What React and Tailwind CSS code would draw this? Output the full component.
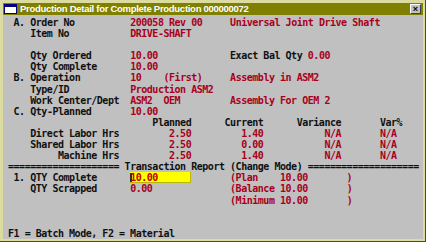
import React from "react";

const RED = "text-[#a8001c]";

// each row: [col, text, red?] ; "input" is the yellow edit field
const rows = [
  [[1, "A."], [4, "Order No"], [22, "200058 Rev 00", 1], [40, "Universal Joint Drive Shaft", 1]],
  [[4, "Item No"], [22, "DRIVE-SHAFT", 1]],
  [],
  [[4, "Qty Ordered"], [22, "10.00", 1], [40, "Exact Bal Qty"], [54, "0.00", 1]],
  [[4, "Qty Complete"], [22, "10.00", 1]],
  [[1, "B."], [4, "Operation"], [22, "10", 1], [28, "(First)", 1], [40, "Assembly in ASM2", 1]],
  [[4, "Type/ID"], [22, "Production ASM2", 1]],
  [[4, "Work Center/Dept"], [22, "ASM2", 1], [28, "OEM", 1], [40, "Assembly For OEM 2", 1]],
  [[1, "C."], [4, "Qty-Planned"], [22, "10.00", 1]],
  [[26, "Planned"], [39, "Current"], [52, "Variance"], [67, "Var%"]],
  [[4, "Direct Labor Hrs"], [29, "2.50", 1], [42, "1.40", 1], [57, "N/A", 1], [67, "N/A", 1]],
  [[4, "Shared Labor Hrs"], [29, "2.50", 1], [42, "0.00", 1], [57, "N/A", 1], [67, "N/A", 1]],
  [[9, "Machine Hrs"], [29, "2.50", 1], [42, "1.40", 1], [57, "N/A", 1], [67, "N/A", 1]],
  [[0, "===================="], [21, "Transaction Report (Change Mode)"], [54, "===================="]],
  [[1, "1."], [4, "QTY Complete"], [22, "input"], [40, "(Plan", 1], [49, "10.00", 1], [61, ")", 1]],
  [[4, "QTY Scrapped"], [22, "0.00", 1], [40, "(Balance", 1], [49, "10.00", 1], [61, ")", 1]],
  [[40, "(Minimum", 1], [49, "10.00", 1], [61, ")", 1]],
  [],
  [],
  [[0, "F1 = Batch Mode, F2 = Material"]],
];

function Line({ segs }) {
  let col = 0;
  const out = [];
  segs.forEach(([c, text, red], i) => {
    if (c > col) out.push(" ".repeat(c - col));
    if (text === "input") {
      out.push(
        <span key={i} className="relative inline-block align-top h-[11px] w-[61px] bg-[#ffff00] border-r border-b border-[#b8b800] text-[#c00000]">
          <span className="absolute left-0 top-[1px] w-[2px] h-[9px] bg-[#303030]" />
          10.00
        </span>
      );
      col = c + 11;
    } else {
      out.push(<span key={i} className={red ? RED : ""}>{text}</span>);
      col = c + text.length;
    }
  });
  return <div className="h-[11.1px] leading-[11.1px] whitespace-pre">{out}</div>;
}

export default function App() {
  return (
    <div className="w-[426px] h-[242px] bg-[#dcdca0] pt-[3px] pl-[3px] pr-[2px] pb-[2px] border-r border-b border-[#505000] flex flex-col overflow-hidden">
      <div className="h-[12px] bg-[#808000] flex items-center pl-[1px] pr-[2px] shrink-0">
        <div className="w-[13px] h-[10px] bg-white border border-[#000080] border-t-[3px] mr-[3px]" />
        <span className="text-white font-bold text-[9.5px] tracking-[-0.28px] leading-none" style={{ fontFamily: '"Liberation Sans", Arial, sans-serif' }}>
          Production Detail for Complete Production 000000072
        </span>
        <div className="ml-auto w-[11px] h-[10px] bg-[#c0c0c0] border-t border-l border-white border-r border-b border-r-[#404040] border-b-[#404040] flex items-center justify-center text-black font-bold text-[9px] leading-none" style={{ fontFamily: '"Liberation Sans", Arial, sans-serif' }}>
          ×
        </div>
      </div>
      <div
        className="flex-1 bg-[#c0c0c0] pl-[5px] pt-[2px] text-[10px] tracking-[-0.47px] font-bold text-[#101010]"
        style={{ fontFamily: '"DejaVu Sans Mono", "Liberation Mono", monospace' }}
      >
        {rows.map((segs, i) => (
          <Line key={i} segs={segs} />
        ))}
      </div>
    </div>
  );
}
